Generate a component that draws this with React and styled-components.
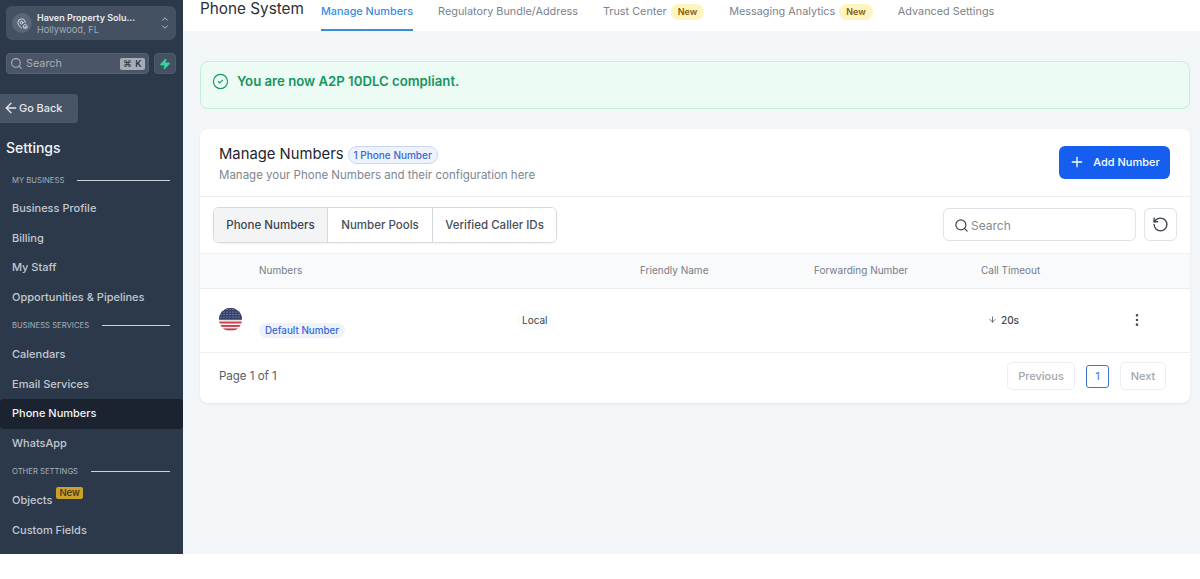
import React from "react";
import styled, { createGlobalStyle } from "styled-components";
import { ArrowLeft, ArrowDown, ChevronDown, ChevronUp, CircleCheck, EllipsisVertical, MapPinHouse, Plus, RotateCcw, Search, Zap } from "lucide-react";

const GlobalStyle = createGlobalStyle`
  html, body { margin: 0; padding: 0; background: #fff; }
  * { box-sizing: border-box; }
  body { font-family: Inter, "Liberation Sans", sans-serif; -webkit-font-smoothing: antialiased; }
`;

const Page = styled.div`
  display: flex;
  width: 1200px;
  height: 554px;
  overflow: hidden;
`;

const Sidebar = styled.aside`
  width: 183px;
  flex: none;
  background: #2c394b;
  padding-top: 6px;
  display: flex;
  flex-direction: column;
`;

const OrgCard = styled.div`
  margin: 0 7px 0 6px;
  height: 34px;
  border-radius: 6px;
  background: #445162;
  display: flex;
  align-items: center;
  padding: 0 6px;
  gap: 5px;
`;

const OrgIcon = styled.div`
  width: 20px;
  height: 20px;
  border-radius: 50%;
  background: #5a6675;
  color: #e5e7eb;
  display: flex;
  align-items: center;
  justify-content: center;
`;

const OrgText = styled.div`
  flex: 1;
  min-width: 0;
  padding-top: 2px;
`;

const OrgName = styled.div`
  font-size: 9px;
  line-height: 12px;
  font-weight: 600;
  color: #e9ebef;
  white-space: nowrap;
`;

const OrgPlace = styled.div`
  font-size: 9.2px;
  line-height: 12px;
  color: #a3abb6;
`;

const Chevrons = styled.div`
  display: flex;
  flex-direction: column;
  color: #cbd0d7;
  svg { margin: -1px 0; }
`;

const SearchRow = styled.div`
  display: flex;
  gap: 5px;
  margin: 13px 7px 0 6px;
  height: 21px;
`;

const SideSearch = styled.div`
  flex: 1;
  background: #4a5667;
  border: 1px solid #566273;
  border-radius: 4px;
  display: flex;
  align-items: center;
  padding: 0 3px;
  gap: 3px;
  color: #a9b0ba;
  font-size: 10.8px;
`;

const SearchLabel = styled.span`
  flex: 1;
`;

const KeyHint = styled.span`
  background: #a6adb6;
  color: #2c394b;
  border-radius: 2px;
  font-size: 9px;
  font-weight: 600;
  line-height: 12px;
  padding: 0 3px;
  letter-spacing: 0.5px;
`;

const BoltButton = styled.div`
  width: 22px;
  background: #445162;
  border: 1px solid #4f5b6b;
  border-radius: 4px;
  display: flex;
  align-items: center;
  justify-content: center;
  color: #37d39a;
`;

const BackButton = styled.div`
  margin-top: 20px;
  width: 78px;
  height: 29px;
  background: #485567;
  border-radius: 0 4px 4px 0;
  color: #e5e7eb;
  display: flex;
  align-items: center;
  padding: 0 0 1px 3px;
  font-size: 10.9px;
  font-weight: 500;
`;

const SideTitle = styled.div`
  margin: 16px 0 0 6px;
  color: #f3f4f6;
  font-size: 14px;
  line-height: 18px;
  font-weight: 500;
`;

const Section = styled.div`
  display: flex;
  align-items: center;
  gap: 13px;
  height: 12px;
  margin: ${(p) => p.$top}px 13px 0 12px;
  font-size: 7.7px;
  color: #aab1bb;
  white-space: nowrap;
  &::after {
    content: "";
    flex: 1;
    height: 1px;
    background: #cdd2d9;
  }
`;

const NavItem = styled.div`
  height: ${(p) => (p.$active ? 30 : 29.5)}px;
  margin-top: ${(p) => p.$top || 0}px;
  padding: 0 0 ${(p) => (p.$active ? 1 : 0)}px 12px;
  display: flex;
  align-items: center;
  gap: 4px;
  font-size: 11px;
  font-weight: 500;
  color: ${(p) => (p.$active ? "#f3f4f6" : "#c3c8d0")};
  background: ${(p) => (p.$active ? "#1b2230" : "transparent")};
  border-radius: ${(p) => (p.$active ? "4px" : "0")};
`;

const NewTag = styled.span`
  position: relative;
  top: -7px;
  background: #c9a227;
  color: #3a3520;
  border-radius: 2px;
  font-size: 9.5px;
  line-height: 12px;
  padding: 0 3px;
`;

const Main = styled.main`
  flex: 1;
  min-width: 0;
  background: #f2f6f9;
  display: flex;
  flex-direction: column;
`;

const TopBar = styled.header`
  height: 31px;
  flex: none;
  background: #fff;
  display: flex;
  padding-left: 17px;
`;

const PageTitle = styled.h1`
  margin: 0 17px 0 0;
  font-size: 15.3px;
  line-height: 18px;
  font-weight: 400;
  color: #2b2f36;
`;

const Tab = styled.div`
  height: 31px;
  margin-right: ${(p) => p.$gap}px;
  padding-top: 4px;
  display: flex;
  align-items: flex-start;
  gap: 4px;
  font-size: 10.85px;
  line-height: 15px;
  white-space: nowrap;
  font-weight: ${(p) => (p.$active ? 500 : 400)};
  color: ${(p) => (p.$active ? "#3a8ce0" : "#7b828c")};
  border-bottom: 2px solid ${(p) => (p.$active ? "#3a8ce0" : "transparent")};
`;

const TabTag = styled.span`
  background: #fdf5bf;
  color: #8a5a10;
  border-radius: 9px;
  font-size: 9px;
  line-height: 16px;
  font-weight: 600;
  padding: 0 7px;
`;

const Content = styled.div`
  padding: 30px 10px 0 17px;
`;

const Banner = styled.div`
  height: 48px;
  border-radius: 8px;
  border: 1px solid #c3eed7;
  background: #ecfbf3;
  display: flex;
  align-items: flex-start;
  gap: 8px;
  padding: 11px;
  color: #169560;
  font-size: 13.2px;
  line-height: 17px;
  font-weight: 600;
`;

const Card = styled.section`
  margin-top: 20px;
  height: 274px;
  background: #fff;
  border-radius: 8px;
  box-shadow: 0 1px 2px rgba(16, 24, 40, 0.08);
  display: flex;
  flex-direction: column;
`;

const CardHead = styled.div`
  height: 68px;
  flex: none;
  padding: 15px 20px 0 19px;
  display: flex;
  justify-content: space-between;
  border-bottom: 1px solid #ebedf0;
`;

const HeadTitleRow = styled.div`
  display: flex;
  align-items: flex-start;
  gap: 4px;
  height: 20px;
`;

const CardTitle = styled.h2`
  margin: 0;
  font-size: 14.8px;
  line-height: 20px;
  font-weight: 400;
  color: #1f2530;
`;

const CountPill = styled.span`
  margin-top: 2px;
  background: #eef2fd;
  border: 1px solid #c9d5f5;
  border-radius: 9px;
  color: #3668d6;
  font-size: 10px;
  line-height: 16px;
  font-weight: 500;
  padding: 0 5px;
`;

const CardSub = styled.div`
  margin-top: 4px;
  font-size: 11.5px;
  line-height: 14px;
  color: #80868f;
`;

const AddButton = styled.button`
  margin-top: 2px;
  width: 111px;
  height: 33px;
  padding: 0 0 2px;
  border: 0;
  border-radius: 6px;
  background: #155eef;
  color: #fff;
  font: 500 11px Inter, sans-serif;
  display: flex;
  align-items: center;
  justify-content: center;
  gap: 8px;
`;

const Toolbar = styled.div`
  height: 56px;
  flex: none;
  padding: 10px 13px 0 13px;
  display: flex;
  align-items: flex-start;
`;

const Segments = styled.div`
  display: flex;
  height: 36px;
  border: 1px solid #d5d9de;
  border-radius: 6px;
  overflow: hidden;
  box-shadow: 0 1px 2px rgba(16, 24, 40, 0.05);
`;

const Segment = styled.div`
  display: flex;
  align-items: center;
  justify-content: center;
  padding-bottom: 1px;
  width: ${(p) => p.$width}px;
  font-size: 11.5px;
  font-weight: 500;
  color: ${(p) => (p.$active ? "#3c434e" : "#464d58")};
  background: ${(p) => (p.$active ? "#f2f4f6" : "#fff")};
  & + & { border-left: 1px solid #d5d9de; }
`;

const TableSearch = styled.div`
  margin-left: auto;
  width: 193px;
  height: 33px;
  margin-top: 1px;
  border: 1px solid #dfe2e6;
  border-radius: 6px;
  display: flex;
  align-items: center;
  gap: 2px;
  padding: 1px 0 0 10px;
  color: #3f4650;
  font-size: 12px;
  span { color: #858b94; }
`;

const RefreshButton = styled.div`
  margin: 1px 0 0 8px;
  width: 33px;
  height: 33px;
  border: 1px solid #dfe2e6;
  border-radius: 6px;
  display: flex;
  align-items: center;
  justify-content: center;
  color: #3f4650;
`;

const columns = "59px 263px 118px 174px 167px 1fr";

const TableHead = styled.div`
  height: 36px;
  flex: none;
  display: grid;
  grid-template-columns: ${columns};
  align-items: center;
  padding-bottom: 2px;
  background: #f8fafb;
  border-top: 1px solid #f0f2f4;
  border-bottom: 1px solid #ebedf0;
  font-size: 10px;
  color: #757c86;
`;

const TableRow = styled.div`
  height: 64px;
  flex: none;
  display: grid;
  grid-template-columns: ${columns};
  align-items: center;
  padding-bottom: 2px;
  border-bottom: 1px solid #eef0f2;
  font-size: 10px;
  color: #3f4650;
  isolation: isolate;
`;

const FlagCell = styled.div`
  padding-left: 19px;
  display: flex;
`;

const DefaultPill = styled.span`
  display: inline-block;
  margin-top: 21px;
  background: #eef2fb;
  color: #3668d6;
  border-radius: 8px;
  font-size: 9.8px;
  line-height: 15px;
  font-weight: 500;
  padding: 0 6px;
`;

const LocalCell = styled.div`
  position: relative;
  &::before {
    content: "";
    position: absolute;
    inset: -3px auto -3px -6px;
    width: 37px;
    background: #fafbfb;
    border-radius: 8px;
    z-index: -1;
  }
`;

const TimeoutCell = styled.div`
  display: flex;
  align-items: center;
  gap: 4px;
  padding-left: 7px;
  font-weight: 500;
`;

const MenuCell = styled.div`
  display: flex;
  padding-left: 106px;
  color: #4a515c;
`;

const Footer = styled.div`
  flex: 1;
  display: flex;
  align-items: center;
  padding: 0 24px 4px 19px;
  font-size: 11.5px;
  color: #555c66;
`;

const PageInfo = styled.span`
  margin-right: auto;
`;

const PageButton = styled.div`
  height: 28px;
  width: ${(p) => p.$width}px;
  border: 1px solid #eceef1;
  border-radius: 5px;
  display: flex;
  align-items: center;
  justify-content: center;
  color: #a0a5ac;
  font-size: 11px;
  font-weight: 500;
`;

const PageNumber = styled.div`
  width: 23px;
  height: 23px;
  margin: 0 11px;
  border: 1px solid #3f73d8;
  border-radius: 3px;
  display: flex;
  align-items: center;
  justify-content: center;
  color: #3f73d8;
  font-size: 11px;
`;

const UsFlag = () => (
  <svg width="23" height="23" viewBox="0 0 23 23">
    <defs>
      <clipPath id="flag-clip">
        <circle cx="11.5" cy="11.5" r="11.5" />
      </clipPath>
    </defs>
    <g clipPath="url(#flag-clip)">
      <rect width="23" height="23" fill="#f2f2f4" />
      {[0, 3.4, 6.8, 10.2, 13.6, 17, 20.4].map((y) => (
        <rect key={y} y={y} width="23" height="1.9" fill="#c8404f" />
      ))}
      <rect width="23" height="11" fill="#34406e" />
      {[1.5, 4, 6.5, 9].map((y) =>
        [2, 5, 8, 11, 14, 17, 20].map((x) => (
          <circle key={`${x}-${y}`} cx={x} cy={y} r="0.5" fill="#c9cde0" />
        ))
      )}
    </g>
  </svg>
);

const App = () => {
  return (
    <>
      <GlobalStyle />
      <Page>
        <Sidebar>
          <OrgCard>
            <OrgIcon><MapPinHouse size={11} /></OrgIcon>
            <OrgText>
              <OrgName>Haven Property Solu...</OrgName>
              <OrgPlace>Hollywood, FL</OrgPlace>
            </OrgText>
            <Chevrons>
              <ChevronUp size={10} />
              <ChevronDown size={10} />
            </Chevrons>
          </OrgCard>
          <SearchRow>
            <SideSearch>
              <Search size={13} />
              <SearchLabel>Search</SearchLabel>
              <KeyHint>⌘ K</KeyHint>
            </SideSearch>
            <BoltButton><Zap size={12} fill="currentColor" /></BoltButton>
          </SearchRow>
          <BackButton><ArrowLeft size={16} />Go Back</BackButton>
          <SideTitle>Settings</SideTitle>
          <Section $top={17}>MY BUSINESS</Section>
          <NavItem $top={7.5}>Business Profile</NavItem>
          <NavItem>Billing</NavItem>
          <NavItem>My Staff</NavItem>
          <NavItem>Opportunities &amp; Pipelines</NavItem>
          <Section $top={7.5}>BUSINESS SERVICES</Section>
          <NavItem $top={8.5}>Calendars</NavItem>
          <NavItem>Email Services</NavItem>
          <NavItem $active>Phone Numbers</NavItem>
          <NavItem>WhatsApp</NavItem>
          <Section $top={7.5}>OTHER SETTINGS</Section>
          <NavItem $top={8}>Objects <NewTag>New</NewTag></NavItem>
          <NavItem>Custom Fields</NavItem>
        </Sidebar>
        <Main>
          <TopBar>
            <PageTitle>Phone System</PageTitle>
            <Tab $active $gap={25}>Manage Numbers</Tab>
            <Tab $gap={25}>Regulatory Bundle/Address</Tab>
            <Tab $gap={25}>Trust Center <TabTag>New</TabTag></Tab>
            <Tab $gap={25}>Messaging Analytics <TabTag>New</TabTag></Tab>
            <Tab $gap={0}>Advanced Settings</Tab>
          </TopBar>
          <Content>
            <Banner>
              <CircleCheck size={17} strokeWidth={1.6} />
              You are now A2P 10DLC compliant.
            </Banner>
            <Card>
              <CardHead>
                <div>
                  <HeadTitleRow>
                    <CardTitle>Manage Numbers</CardTitle>
                    <CountPill>1 Phone Number</CountPill>
                  </HeadTitleRow>
                  <CardSub>Manage your Phone Numbers and their configuration here</CardSub>
                </div>
                <AddButton><Plus size={16} />Add Number</AddButton>
              </CardHead>
              <Toolbar>
                <Segments>
                  <Segment $active $width={113}>Phone Numbers</Segment>
                  <Segment $width={105}>Number Pools</Segment>
                  <Segment $width={124}>Verified Caller IDs</Segment>
                </Segments>
                <TableSearch><Search size={15} /><span>Search</span></TableSearch>
                <RefreshButton><RotateCcw size={17} /></RefreshButton>
              </Toolbar>
              <TableHead>
                <div />
                <div>Numbers</div>
                <div />
                <div>Friendly Name</div>
                <div>Forwarding Number</div>
                <div>Call Timeout</div>
              </TableHead>
              <TableRow>
                <FlagCell><UsFlag /></FlagCell>
                <div><DefaultPill>Default Number</DefaultPill></div>
                <LocalCell>Local</LocalCell>
                <div />
                <div />
                <TimeoutCell>
                  <ArrowDown size={9} />20s
                  <MenuCell><EllipsisVertical size={16} /></MenuCell>
                </TimeoutCell>
              </TableRow>
              <Footer>
                <PageInfo>Page 1 of 1</PageInfo>
                <PageButton $width={68}>Previous</PageButton>
                <PageNumber>1</PageNumber>
                <PageButton $width={46}>Next</PageButton>
              </Footer>
            </Card>
          </Content>
        </Main>
      </Page>
    </>
  );
};

export default App;
